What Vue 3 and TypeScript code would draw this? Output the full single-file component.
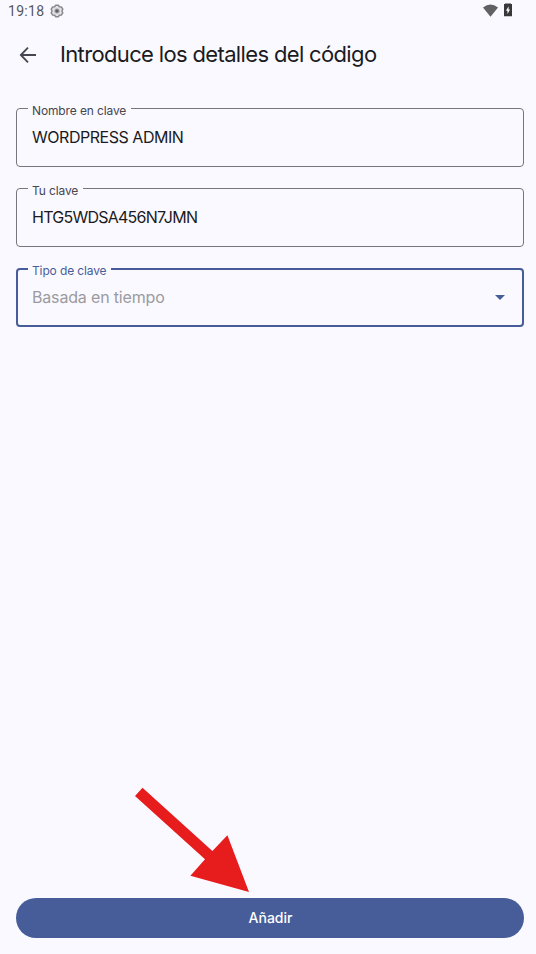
<script setup lang="ts">
import { ref } from 'vue'

interface Field {
  id: string
  label: string
  value: string
  select?: boolean
}

const fields = ref<Field[]>([
  { id: 'name', label: 'Nombre en clave', value: 'WORDPRESS ADMIN' },
  { id: 'key', label: 'Tu clave', value: 'HTG5WDSA456N7JMN' },
  { id: 'type', label: 'Tipo de clave', value: 'Basada en tiempo', select: true },
])
</script>

<template>
  <div class="screen">
    <div class="status">
      <span class="clock">19:18</span>
      <svg class="gear" width="14" height="14" viewBox="0 0 14 14">
        <path d="M5.5 1.2 H8.5 L9.2 2.8 L11.3 2.9 L12.8 5.2 L11.9 7 L12.8 8.8 L11.3 11.1 L9.2 11.2 L8.5 12.8 H5.5 L4.8 11.2 L2.7 11.1 L1.2 8.8 L2.1 7 L1.2 5.2 L2.7 2.9 L4.8 2.8 Z" fill="#e4e4e8" stroke="#88888c" stroke-width="1.5" stroke-linejoin="round" />
        <circle cx="7" cy="7" r="2.8" fill="#b4b4b8" />
        <circle cx="7" cy="7" r="1.8" fill="#626265" />
      </svg>
      <svg class="wifi" width="16" height="13" viewBox="0 0 16 13">
        <path d="M0 3.4 Q7.5 -2.4 15 3.4 L7.5 12.7 Z" fill="#616164" />
      </svg>
      <svg class="battery" width="8" height="14" viewBox="0 0 8 14">
        <path d="M1 .4 H7 V1 H8 V13.3 H0 V1 H1 Z" fill="#38383a" />
        <path d="M4.6 3.2 L2 7.8 H3.5 V11 L6 6.6 H4.6 Z" fill="#fff" />
      </svg>
    </div>

    <header class="bar">
      <svg width="18" height="18" viewBox="0 0 18 18" fill="none" stroke="#45464f" stroke-width="1.8">
        <path d="M9 1.6 L1.8 9 L9 16.4 M2 9 H17" />
      </svg>
      <h1>Introduce los detalles del código</h1>
    </header>

    <main class="form">
      <fieldset v-for="field in fields" :key="field.id" class="field" :class="[field.id, { active: field.select }]">
        <legend><span>{{ field.label }}</span></legend>
        <div class="content">
          <span class="value">{{ field.value }}</span>
          <svg v-if="field.select" width="10" height="5" viewBox="0 0 10 5">
            <path d="M0 0 H10 L5 5 Z" fill="#475d9a" />
          </svg>
        </div>
      </fieldset>
    </main>

    <footer class="footer">
      <svg class="pointer" width="115" height="106" viewBox="0 0 115 106">
        <path d="M7.5 .8 L77.4 64.1 L92.4 48.2 L114 105 L55.4 88.8 L70 72.3 L0 9 Z" fill="#e71c1c" />
      </svg>
      <button type="button">Añadir</button>
    </footer>
  </div>
</template>

<style>
body {
  background: #faf9ff;
}
</style>

<style scoped>
.screen {
  box-sizing: border-box;
  height: 954px;
  padding: 0 12px 16px 16px;
  display: flex;
  flex-direction: column;
  background: #faf9ff;
  color: #1a1b21;
  font-family: Inter, 'Liberation Sans', sans-serif;
}
.status {
  height: 22px;
  margin-left: -8px;
  display: flex;
  align-items: center;
}
.clock {
  width: 42px;
  color: #57575a;
  font: 400 14px/22px Roboto, sans-serif;
  letter-spacing: 0.3px;
}
.wifi {
  margin: -2px 5px 0 auto;
}
.battery {
  margin: -2px 12px 0 0;
}
.bar {
  height: 66px;
  padding-left: 3px;
  display: flex;
  align-items: center;
  gap: 23px;
}
h1 {
  margin: 0;
  padding-bottom: 2px;
  font-size: 22px;
  font-weight: 400;
  line-height: 28px;
  letter-spacing: -0.65px;
  white-space: nowrap;
}
.form {
  margin-top: 20px;
  display: flex;
  flex-direction: column;
  gap: 21px;
}
.field {
  box-sizing: border-box;
  height: 59px;
  min-width: 0;
  margin: 0;
  padding: 0 15px 0 11px;
  border: 1px solid #757680;
  border-radius: 4px;
}
legend {
  height: 1px;
  padding: 0 5px 0 4px;
  font-size: 12px;
  line-height: 16px;
  letter-spacing: -0.13px;
  color: #45464f;
  white-space: nowrap;
}
legend span {
  display: block;
  margin-top: -5px;
}
.content {
  height: 57px;
  padding-left: 4px;
  display: flex;
  align-items: center;
  justify-content: space-between;
}
.value {
  padding-bottom: 2px;
  font-size: 16px;
  font-weight: 400;
  line-height: 24px;
}
.name .value {
  letter-spacing: -0.47px;
}
.key .value {
  letter-spacing: -0.75px;
}
.type .value {
  letter-spacing: -0.17px;
}
.active {
  padding: 0 17px 0 10px;
  border: 2px solid #475d9a;
}
.active legend {
  height: 2px;
  color: #475d9a;
}
.active .content {
  height: 55px;
}
.active .value {
  color: #9b9ba0;
}
.footer {
  margin-top: auto;
  position: relative;
}
.pointer {
  position: absolute;
  left: 119px;
  top: -111px;
}
button {
  display: block;
  width: 100%;
  height: 40px;
  padding: 0 0 0 1px;
  border: 0;
  border-radius: 20px;
  background: #475d9a;
  color: #fff;
  font: 500 14px/20px Inter, sans-serif;
}
</style>
